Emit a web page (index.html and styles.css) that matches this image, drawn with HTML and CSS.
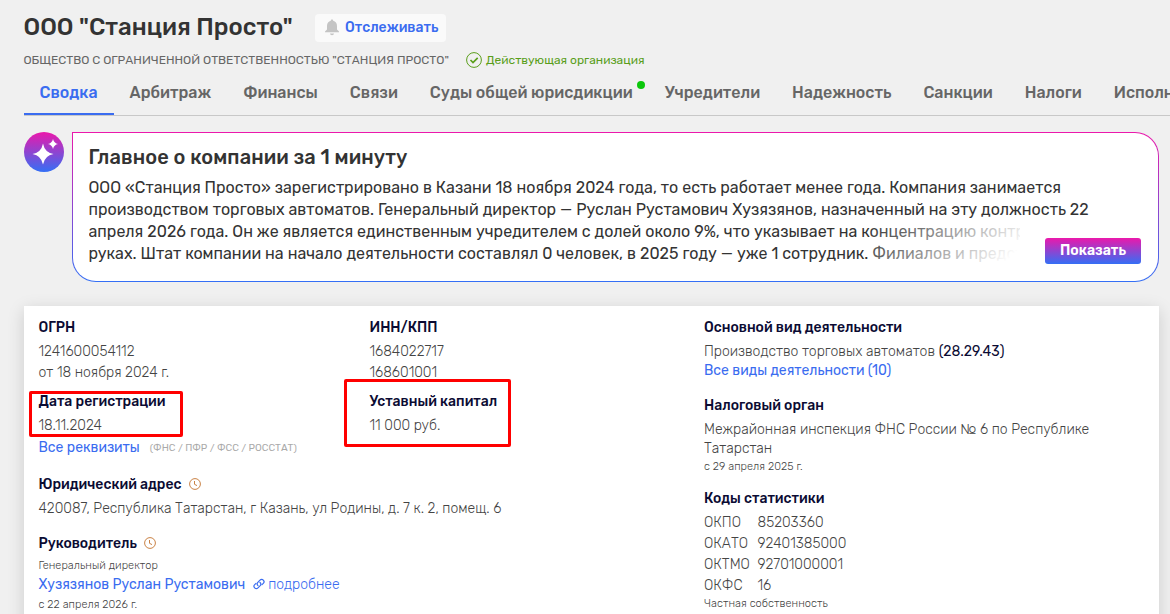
FILE: index.html
```html
<!DOCTYPE html>
<html lang="ru">
<head>
    <meta charset="UTF-8">
    <meta name="viewport" content="width=device-width, initial-scale=1.0">
    <title>ООО "Станция Просто"</title>
    <link rel="stylesheet" href="styles.css">
</head>
<body>
    <header class="company-header">
        <div class="title-row">
            <h1>ООО "Станция Просто"</h1>
            <button class="watch-button">
                <svg width="16" height="17" viewBox="0 0 16 17" fill="#c4c4c4">
                    <path d="M8 .5c.8 0 1.200.5 1.200 1.300C11.500 2.400 13 4.200 13 7v3.500l2 2v.800H1v-.800l2-2V7c0-2.800 1.500-4.600 3.800-5.200C6.800 1 7.200.5 8 .5z"/>
                    <path d="M6 14.500h4c-.2 1-1 1.700-2 1.700s-1.800-.7-2-1.700z"/>
                </svg>
                Отслеживать
            </button>
        </div>
        <div class="name-row">
            <span class="full-name">ОБЩЕСТВО С ОГРАНИЧЕННОЙ ОТВЕТСТВЕННОСТЬЮ "СТАНЦИЯ ПРОСТО"</span>
            <span class="status">
                <svg width="16" height="16" viewBox="0 0 16 16" fill="none" stroke="#5a9e1b">
                    <circle cx="8" cy="8" r="7.400"/>
                    <path d="M4.500 8l2.500 2.500 4.700-4.700" stroke-width="1.700"/>
                </svg>
                Действующая организация
            </span>
        </div>
    </header>

    <nav class="tabs">
        <a class="tab active">Сводка</a>
        <a class="tab">Арбитраж</a>
        <a class="tab">Финансы</a>
        <a class="tab">Связи</a>
        <a class="tab">Суды общей юрисдикции<span class="dot"></span></a>
        <a class="tab">Учредители</a>
        <a class="tab">Надежность</a>
        <a class="tab">Санкции</a>
        <a class="tab">Налоги</a>
        <a class="tab">Исполнительные производства</a>
    </nav>

    <section class="summary">
        <div class="summary-icon">
            <svg width="40" height="40" viewBox="0 0 40 40" fill="#fff">
                <path d="M19 11.500q1.700 9 10.500 10.500q-8.800 1.500-10.500 10.500q-1.700-9-10.500-10.500q8.800-1.500 10.500-10.500z"/>
                <path d="M29 7q1 4.200 5 5q-4 .8-5 5q-1-4.200-5-5q4-.8 5-5z"/>
            </svg>
        </div>
        <div class="summary-box">
            <h2>Главное о компании за 1 минуту</h2>
            <div class="summary-text">
                <div>ООО «Станция Просто» зарегистрировано в Казани 18 ноября 2024 года, то есть работает менее года. Компания занимается</div>
                <div>производством торговых автоматов. Генеральный директор — Руслан Рустамович Хузязянов, назначенный на эту должность 22</div>
                <div class="short">апреля 2026 года. Он же является единственным учредителем с долей около 9%, что указывает на концентрацию контр</div>
                <div class="short">руках. Штат компании на начало деятельности составлял 0 человек, в 2025 году — уже 1 сотрудник. Филиалов и предст</div>
            </div>
            <div class="fade"></div>
            <button class="show-button">Показать</button>
        </div>
    </section>

    <main class="card">
        <div class="main-column">
            <div class="pair">
                <div class="field">
                    <h3>ОГРН</h3>
                    <p>1241600054112</p>
                    <p>от 18 ноября 2024 г.</p>
                </div>
                <div class="field">
                    <h3>ИНН/КПП</h3>
                    <p>1684022717</p>
                    <p>168601001</p>
                </div>
                <div class="field">
                    <h3>Дата регистрации</h3>
                    <p>18.11.2024</p>
                    <div class="mark mark-date"></div>
                </div>
                <div class="field">
                    <h3>Уставный капитал</h3>
                    <p>11 000 руб.</p>
                    <div class="mark mark-capital"></div>
                </div>
            </div>
            <div class="details-row">
                <a class="link">Все реквизиты</a>
                <span class="hint">(ФНС / ПФР / ФСС / РОССТАТ)</span>
            </div>
            <div class="field address">
                <h3>Юридический адрес
                    <svg class="clock" width="12" height="12" viewBox="0 0 12 12" fill="none" stroke="#c98245"><circle cx="6" cy="6" r="5.400"/><path d="M5.500 3v3.300l2.500 1.300"/></svg>
                </h3>
                <p>420087, Республика Татарстан, г Казань, ул Родины, д. 7 к. 2, помещ. 6</p>
            </div>
            <div class="field">
                <h3>Руководитель
                    <svg class="clock" width="12" height="12" viewBox="0 0 12 12" fill="none" stroke="#c98245"><circle cx="6" cy="6" r="5.400"/><path d="M5.500 3v3.300l2.500 1.300"/></svg>
                </h3>
                <p class="small role">Генеральный директор</p>
                <p class="person">
                    <a class="link person-name">Хузязянов Руслан Рустамович</a>
                    <svg width="12" height="12" viewBox="0 0 12 12" fill="none" stroke="#3a6cf0" stroke-width="1.200" stroke-linecap="round"><path d="M5 7.600a2.300 2.300 0 0 1-.2-3.200L7 2.100a2.300 2.300 0 0 1 3.300 3.300L9 6.700"/><path d="M7 4.500a2.300 2.300 0 0 1 .2 3.200L5 9.900a2.300 2.300 0 0 1-3.300-3.300L3 5.300"/></svg>
                    <a class="link light">подробнее</a>
                </p>
                <p class="small since">с 22 апреля 2026 г.</p>
            </div>
        </div>

        <div class="side-column">
            <div class="field activity">
                <h3>Основной вид деятельности</h3>
                <p class="tight">Производство торговых автоматов <span class="code">(28.29.43)</span></p>
                <p class="tight"><a class="link">Все виды деятельности (10)</a></p>
            </div>
            <div class="field tax-office">
                <h3>Налоговый орган</h3>
                <p class="tight">Межрайонная инспекция ФНС России № 6 по Республике<br>Татарстан</p>
                <p class="small">с 29 апреля 2025 г.</p>
            </div>
            <div class="field">
                <h3>Коды статистики</h3>
                <dl class="codes">
                    <dt>ОКПО</dt><dd>85203360</dd>
                    <dt>ОКАТО</dt><dd>92401385000</dd>
                    <dt>ОКТМО</dt><dd>92701000001</dd>
                    <dt>ОКФС</dt><dd>16</dd>
                </dl>
                <p class="small ownership">Частная собственность</p>
            </div>
        </div>
    </main>
</body>
</html>
```
FILE: styles.css
```css
* {
    box-sizing: border-box;
}

body {
    margin: 0;
    height: 614px;
    overflow: hidden;
    background-color: #f0f0f0;
    color: #333;
    font-family: Rubik, Roboto, sans-serif;
    font-size: 14px;
}

h1, h2, h3, p, dl, dd {
    margin: 0;
    font-weight: 500;
}

svg {
    display: block;
    flex: none;
}

button {
    border: none;
    font-family: inherit;
    cursor: pointer;
}

.company-header {
    padding: 12px 0 0 23.5px;
}

.title-row {
    display: flex;
    align-items: center;
    height: 30px;
    gap: 22px;
}

h1 {
    width: 269.5px;
    font-size: 24px;
    line-height: 30px;
    white-space: nowrap;
}

.watch-button {
    display: flex;
    align-items: center;
    gap: 5px;
    width: 131px;
    height: 28px;
    margin-top: 2px;
    padding: 0 9px 1px;
    border-radius: 4px;
    background-color: #fafafa;
    color: #3a6cf0;
    font-size: 14px;
    font-weight: 500;
}

.name-row {
    display: flex;
    align-items: center;
    height: 20px;
    margin-top: 8px;
    color: #666;
    font-size: 12px;
    white-space: nowrap;
}

.full-name {
    width: 442.5px;
}

.status {
    display: flex;
    align-items: center;
    gap: 4px;
    color: #5a9e1b;
}

.tabs {
    display: flex;
    height: 46px;
    margin-left: 23.5px;
    border-bottom: 1px solid #c8c8c8;
    overflow: hidden;
}

.tab {
    position: relative;
    flex: none;
    height: 45px;
    padding: 0 16px;
    color: #666;
    font-size: 16px;
    font-weight: 500;
    line-height: 46px;
    white-space: nowrap;
}

.tab.active {
    border-bottom: 2px solid #3a6cf0;
    color: #3a6cf0;
}

.dot {
    position: absolute;
    top: 11px;
    right: 4px;
    width: 8px;
    height: 8px;
    border-radius: 50%;
    background-color: #0bc70b;
}

.summary {
    display: flex;
    gap: 8px;
    margin: 16px 11px 0 24px;
}

.summary-icon {
    flex: none;
    width: 40px;
    height: 40px;
    border-radius: 50%;
    background: linear-gradient(#eb18ab, #346ff5);
}

.summary-box {
    position: relative;
    flex: 1;
    height: 150px;
    padding: 12px 16px 12px 15.5px;
    border: 1px solid transparent;
    border-radius: 0 24px 24px 24px;
    background: linear-gradient(#fff, #fff) padding-box, linear-gradient(#eb18ab, #346ff5) border-box;
}

h2 {
    font-size: 20px;
    line-height: 24px;
    letter-spacing: 0.1px;
}

.summary-text {
    margin-top: 8px;
    font-size: 16px;
    line-height: 22px;
    letter-spacing: 0.02px;
    white-space: nowrap;
}

.short {
    width: 931.5px;
    overflow: hidden;
}

/* fades out the end of the last two lines */
.fade {
    position: absolute;
    right: 137px;
    bottom: 14px;
    width: 152px;
    height: 44px;
    background: linear-gradient(135deg, rgba(255, 255, 255, 0), #fff 90%);
}

.show-button {
    position: absolute;
    right: 17px;
    bottom: 17px;
    width: 96px;
    height: 26px;
    padding: 0 0 1px;
    border-radius: 3px;
    background: linear-gradient(#eb18ab, #346ff5);
    color: #fff;
    font-size: 14px;
    font-weight: 600;
}

.card {
    display: grid;
    grid-template-columns: 665.5px 1fr;
    height: 330px;
    margin: 24px 11px 0 24px;
    padding: 10px 15px 0 14.5px;
    background-color: #fff;
    box-shadow: 0 4px 16px rgba(0, 0, 0, 0.15);
    color: #444;
}

.pair {
    display: grid;
    grid-template-columns: 331px 1fr;
    row-gap: 7px;
}

.field {
    position: relative;
    font-size: 14px;
    line-height: 21px;
}

h3 {
    display: flex;
    align-items: center;
    gap: 7px;
    height: 25px;
    padding-bottom: 2px;
    color: #0b0b33;
    font-size: 14px;
    font-weight: 500;
}

p, dt, dd {
    font-weight: 300;
}

.link {
    color: #3a6cf0;
    font-weight: 400;
}

.link.light {
    font-weight: 300;
}

.details-row {
    display: flex;
    align-items: center;
    gap: 10px;
    height: 22px;
    margin-bottom: 15px;
}

.hint {
    color: #aaa;
    font-size: 10px;
    padding-top: 1px;
}

.clock {
    margin-bottom: 1px;
}

.address {
    margin-bottom: 13px;
}

.small {
    font-size: 11px;
    line-height: 18px;
    letter-spacing: 0.05px;
}

.role {
    line-height: 17px;
}

.person {
    display: flex;
    align-items: center;
    height: 20px;
    gap: 3px;
}

.person-name {
    margin-right: 5px;
}

.since {
    line-height: 21px;
}

.tight {
    line-height: 19px;
}

.code {
    color: #0b0b33;
    font-weight: 400;
}

.activity {
    margin-bottom: 14px;
}

.activity h3,
.tax-office h3 {
    height: 26px;
    padding-bottom: 3px;
}

.tax-office {
    margin-bottom: 11px;
}

.codes {
    display: grid;
    grid-template-columns: 53.5px 1fr;
}

.ownership {
    line-height: 16px;
}

.mark {
    position: absolute;
    border: 3px solid #f00;
    border-radius: 2px;
}

.mark-date {
    top: 1px;
    left: -9.5px;
    width: 154px;
    height: 46px;
}

.mark-capital {
    top: -11px;
    left: -25.5px;
    width: 167px;
    height: 68px;
}
```
